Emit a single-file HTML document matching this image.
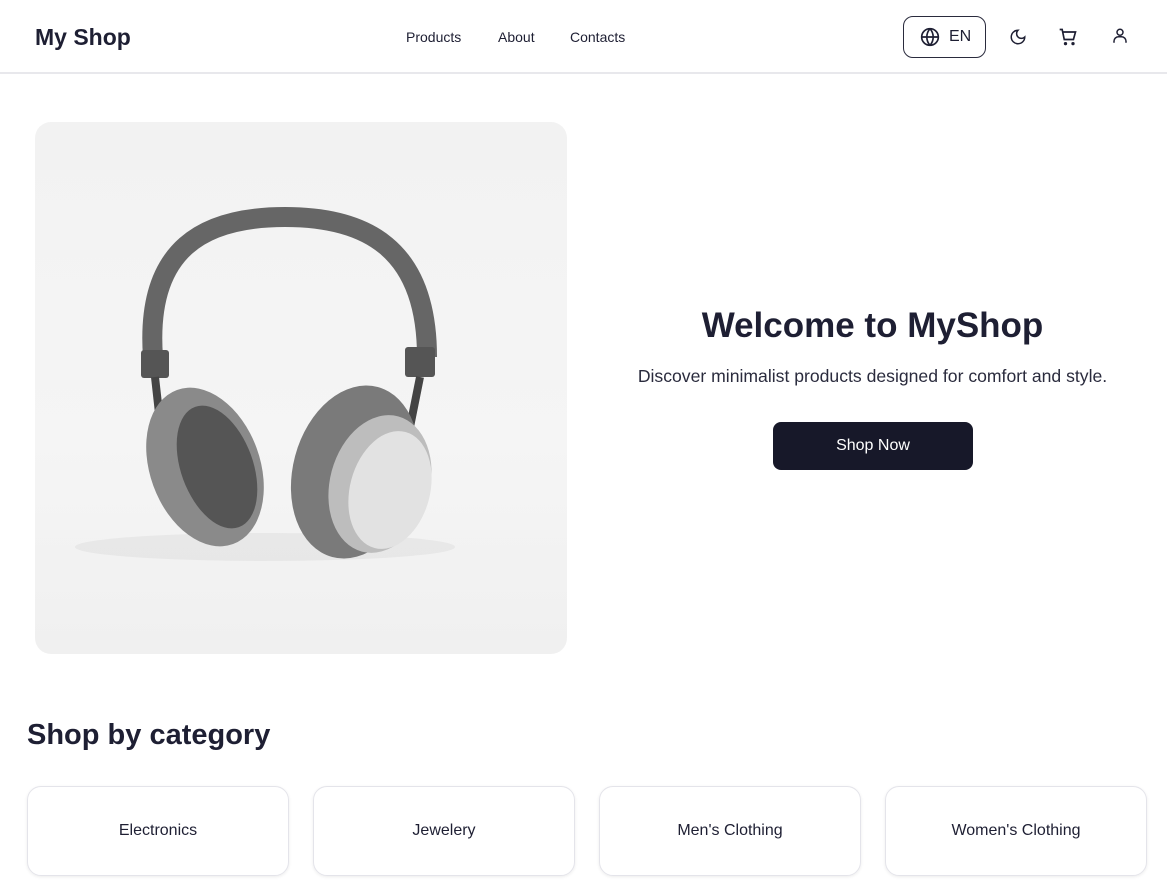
<!DOCTYPE html>
<html><head><meta charset="utf-8"><style>
*{box-sizing:border-box;margin:0;padding:0}
body{width:1167px;height:895px;overflow:hidden;background:#fff;font-family:"Liberation Sans",sans-serif;color:#1e1f33;position:relative}
.hdr{position:absolute;left:0;top:0;width:1167px;height:74px;border-bottom:2px solid #e8e8ec;background:#fff}
.logo{position:absolute;left:35px;top:24px;font-size:23px;font-weight:bold;color:#1e1f33}
.nav a{position:absolute;top:29px;font-size:14px;color:#1e1f33;text-decoration:none}
.lang{position:absolute;left:903px;top:16px;width:83px;height:42px;border:1px solid #2a2b3d;border-radius:10px}
.lang span{position:absolute;left:45px;top:11px;font-size:16px}
.ico{position:absolute}
.hero{position:absolute;left:35px;top:122px;width:532px;height:532px;border-radius:16px;background:linear-gradient(180deg,#f2f2f2,#f5f5f5 60%,#f0f0f0);overflow:hidden}
h1{position:absolute;left:600px;width:545px;text-align:center;top:306px;font-size:35px;font-weight:bold;color:#1e1f33}
.sub{position:absolute;left:580px;width:585px;text-align:center;top:366px;font-size:17.6px;color:#2a2b3d}
.btn{position:absolute;left:773px;top:422px;width:200px;height:48px;border-radius:8px;background:#171829;color:#fff;font-size:16px;text-align:center;line-height:48px}
h2{position:absolute;left:27px;top:719px;font-size:29px;font-weight:bold;color:#1e1f33}
.card{position:absolute;top:786px;width:262px;height:90px;border:1px solid #e4e4ea;border-radius:14px;box-shadow:0 1px 3px rgba(0,0,0,.08);text-align:center;line-height:88px;font-size:16px;color:#1e1f33}
</style></head><body>
<div class="hdr">
<div class="logo">My Shop</div>
<div class="nav"><a style="left:406px">Products</a><a style="left:498px">About</a><a style="left:570px">Contacts</a></div>
<div class="lang"><svg class="ico" style="left:16px;top:10px" width="20" height="20" viewBox="0 0 24 24" fill="none" stroke="#1e1f33" stroke-width="2"><circle cx="12" cy="12" r="10"/><path d="M2 12h20M12 2a15 15 0 0 1 0 20M12 2a15 15 0 0 0 0 20"/></svg><span>EN</span></div>
<svg class="ico" style="left:1009px;top:28px" width="18" height="18" viewBox="0 0 24 24" fill="none" stroke="#1e1f33" stroke-width="2"><path d="M12 3a6 6 0 0 0 9 9 9 9 0 1 1-9-9z"/></svg>
<svg class="ico" style="left:1058px;top:27px" width="20" height="20" viewBox="0 0 24 24" fill="none" stroke="#1e1f33" stroke-width="2"><path d="M2 3h3l2.5 12h11l2.5-9H6"/><circle cx="9" cy="20" r="1"/><circle cx="18" cy="20" r="1"/></svg>
<svg class="ico" style="left:1111px;top:27px" width="18" height="18" viewBox="0 0 24 24" fill="none" stroke="#1e1f33" stroke-width="2"><circle cx="12" cy="7" r="4"/><path d="M4 21v-2a6 6 0 0 1 6-6h4a6 6 0 0 1 6 6v2"/></svg>
</div>
<div class="hero">
<svg width="532" height="532" viewBox="0 0 532 532">
<ellipse cx="230" cy="425" rx="190" ry="14" fill="#e2e2e2" opacity=".7"/>
<path d="M118 235 C110 125 170 95 250 95 C330 95 392 125 392 235" fill="none" stroke="#666" stroke-width="20"/>
<rect x="106" y="228" width="28" height="28" rx="3" fill="#555"/>
<rect x="370" y="225" width="30" height="30" rx="3" fill="#555"/>
<path d="M120 255 L125 300" stroke="#444" stroke-width="8"/>
<path d="M385 255 L375 305" stroke="#444" stroke-width="8"/>
<ellipse cx="170" cy="345" rx="55" ry="82" transform="rotate(-20 170 345)" fill="#8a8a8a"/>
<ellipse cx="182" cy="345" rx="36" ry="64" transform="rotate(-20 182 345)" fill="#555"/>
<ellipse cx="320" cy="350" rx="62" ry="88" transform="rotate(15 320 350)" fill="#7a7a7a"/>
<ellipse cx="345" cy="362" rx="50" ry="70" transform="rotate(15 345 362)" fill="#bdbdbd"/>
<ellipse cx="355" cy="368" rx="40" ry="60" transform="rotate(15 355 368)" fill="#e2e2e2"/>
</svg>
</div>
<h1>Welcome to MyShop</h1>
<div class="sub">Discover minimalist products designed for comfort and style.</div>
<div class="btn">Shop Now</div>
<h2>Shop by category</h2>
<div class="card" style="left:27px">Electronics</div>
<div class="card" style="left:313px">Jewelery</div>
<div class="card" style="left:599px">Men's Clothing</div>
<div class="card" style="left:885px">Women's Clothing</div>
</body></html>
